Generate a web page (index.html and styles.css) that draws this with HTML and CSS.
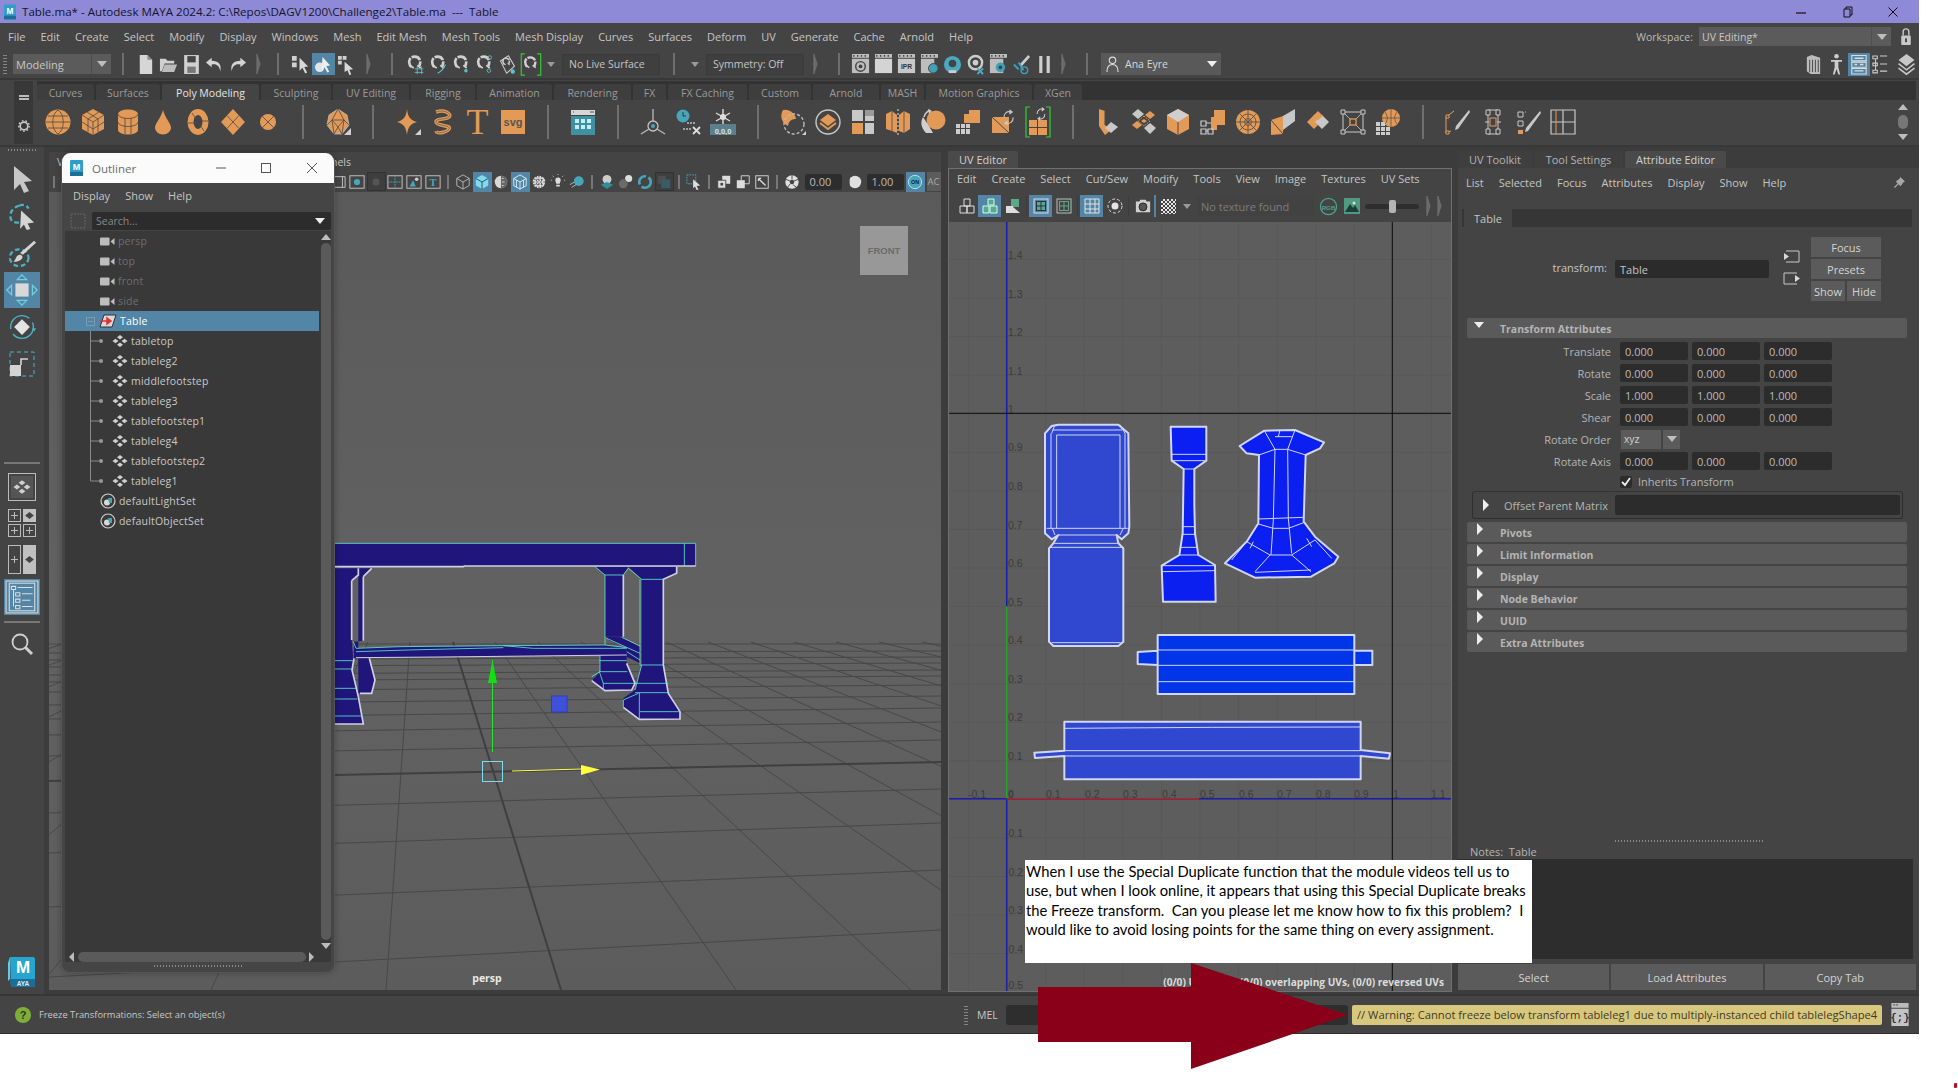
FILE: index.html
```html
<!DOCTYPE html>
<html lang="en">
<head>
<meta charset="utf-8">
<title>Table.ma - Autodesk MAYA 2024.2</title>
<link rel="stylesheet" href="styles.css">
</head>
<body>
<svg class="defs" width="0" height="0">
  <defs>
    <symbol id="mesh" viewBox="0 0 16 12"><path d="M8 0l3 2.2-3 2.2-3-2.2zM3.5 3.8l3 2.2-3 2.2L.5 6zM12.500 3.800l3 2.200-3 2.200-3-2.200zM8 7.600l3 2.200-3 2.200-3-2.200z" fill="#cfcfcf"/></symbol>
    <symbol id="cam" viewBox="0 0 15 9"><rect x="0" y="0.500" width="9.500" height="8" rx="1" fill="#bdbdbd"/><path d="M10.500 4.500L14.500 1v7z" fill="#bdbdbd"/></symbol>
    <symbol id="set" viewBox="0 0 16 16"><circle cx="8" cy="8" r="7" fill="none" stroke="#cfcfcf" stroke-width="1.200"/><circle cx="7" cy="9.500" r="3" fill="#d8d8d8"/><path d="M8 5h4v5H9z" fill="#46a4b8"/></symbol>
    <symbol id="magnet" viewBox="0 0 20 24"><path d="M5 15C1 9 3 3 9 3s8 6 5 11" fill="none" stroke="#d0d0d0" stroke-width="3" stroke-dasharray="11 1.500"/><path d="M3 13l5 3M12 13l4 3" stroke="#d0d0d0" stroke-width="2"/></symbol>
    <symbol id="cyc" viewBox="0 0 14 18"><path d="M2 9C2 4 6 2 9 3M12 9c0 5-4 7-7 6" fill="none" stroke="#c8c8c8" stroke-width="1.300"/><path d="M8 0l4 3-4 3zM6 12l-4 3 4 3z" fill="#c8c8c8"/></symbol>
    <symbol id="chev" viewBox="0 0 6 24"><path d="M1 0l4 12-4 12z" fill="#6a6a6a" stroke="#808080" stroke-width=".6"/></symbol>
    <symbol id="clap" viewBox="0 0 18 20"><path d="M0 0h18v4H0z" fill="#bdbdbd"/><path d="M2 1v2M6 1v2M10 1v2M14 1v2" stroke="#444" stroke-width="1.400"/></symbol>
    <symbol id="dia" viewBox="0 0 10 8"><path d="M5 0l5 4-5 4-5-4z" fill="#444"/></symbol>
  </defs>
</svg>

<div class="app">
  <header class="titlebar">
    <svg class="title-logo" viewBox="0 0 13 16"><rect width="13" height="16" rx="1" fill="#2f9fc9"/><path d="M0 12h13v4H0z" fill="#1e6f96"/><text x="6.500" y="10" text-anchor="middle" class="logo-m">M</text></svg>
    <span class="title-text">Table.ma* - Autodesk MAYA 2024.2: C:\Repos\DAGV1200\Challenge2\Table.ma &nbsp;--- &nbsp;Table</span>
    <div class="win-btns">
      <svg viewBox="0 0 12 12"><path d="M1 7h10" stroke="#111" stroke-width="1.200"/></svg>
      <svg viewBox="0 0 12 12"><path d="M3 3h6v8H3zM5 3V1h6v8H9" fill="none" stroke="#111"/></svg>
      <svg viewBox="0 0 12 12"><path d="M1.500 1.500l9 9M10.500 1.500l-9 9" stroke="#111"/></svg>
    </div>
  </header>

  <nav class="menubar">
    <span>File</span><span>Edit</span><span>Create</span><span>Select</span><span>Modify</span><span>Display</span><span>Windows</span><span>Mesh</span><span>Edit Mesh</span><span>Mesh Tools</span><span>Mesh Display</span><span>Curves</span><span>Surfaces</span><span>Deform</span><span>UV</span><span>Generate</span><span>Cache</span><span>Arnold</span><span>Help</span>
    <div class="workspace">
      <span class="ws-label">Workspace:</span>
      <div class="ws-drop"><span>UV Editing*</span><i class="ws-arrow"><b class="tri-d"></b></i></div>
      <svg class="lock" viewBox="0 0 12 20"><path d="M3 9V5a3 3 0 0 1 6 0v4" fill="none" stroke="#c8c8c8" stroke-width="1.500"/><rect x="1" y="9" width="10" height="10" rx="1" fill="#c8c8c8"/><rect x="5" y="12" width="2" height="4" fill="#444"/></svg>
    </div>
  </nav>

  <div class="statusline">
    <i class="grip g-status"></i>
    <div class="mode-drop"><span>Modeling</span><i class="mode-arrow"><b class="tri-d"></b></i></div>
    <i class="vsep ml11"></i>
    <div class="cells ml10">
      <span class="cell"><svg viewBox="0 0 18 22"><path d="M3 1h8l5 5v15H3z" fill="#d6d6d6"/><path d="M11 1v5h5" fill="#888"/></svg></span>
      <span class="cell"><svg viewBox="0 0 20 20"><path d="M1 4h6l2 2h7v3H6L3 17H1z" fill="#d0d0d0"/><path d="M6 10h13l-3 8H3z" fill="#bcbcbc"/></svg></span>
      <span class="cell"><svg viewBox="0 0 18 20"><path d="M2 1h14v18H2z" fill="#d0d0d0"/><path d="M5 2h8v6H5z" fill="#444"/><path d="M5 12h8v6H5z" fill="#777"/></svg></span>
      <span class="cell"><svg viewBox="0 0 20 20"><path d="M7 3L1 8l6 5V10c5-1 8 1 9 7 2-7-2-11-9-11z" fill="#d4d4d4"/></svg></span>
      <span class="cell"><svg viewBox="0 0 20 20"><path d="M13 3l6 5-6 5V10C8 9 5 11 4 17 2 10 6 6 13 6z" fill="#d4d4d4"/></svg></span>
    </div>
    <svg class="chev ml7"><use href="#chev"/></svg>
    <i class="vsep ml16"></i>
    <div class="cells ml10">
      <span class="cell"><svg viewBox="0 0 20 22"><path d="M1 2h5v5H1zM1 9h5v5H1z" fill="#d0d0d0"/><path d="M9 4l9 9-4 .5 3 6-2 1-3-6-3 3z" fill="#d8d8d8"/></svg></span>
      <span class="cell active"><svg viewBox="0 0 20 22"><circle cx="6" cy="14" r="5" fill="#e4e4e4"/><path d="M9 3l8 9-4 .5 3 6-2 1-3-6-3 3z" fill="#eee"/></svg></span>
      <span class="cell"><svg viewBox="0 0 20 22"><path d="M1 2h4v4H1zM6 2h4v4H6zM1 7h4v4H1z" fill="#d0d0d0"/><path d="M8 8l9 8-4 .5 2 5-2 .5-2-5-3 2z" fill="#d8d8d8"/></svg></span>
    </div>
    <svg class="chev ml8"><use href="#chev"/></svg>
    <i class="vsep ml20"></i>
    <div class="cells ml11">
      <span class="cell"><svg viewBox="0 0 20 24"><use href="#magnet"/><path d="M12 14v9M17 14v9M9 17h10M9 21h10" stroke="#5dbfce"/></svg></span>
      <span class="cell"><svg viewBox="0 0 20 24"><use href="#magnet"/><path d="M9 22c4-2 7-5 9-10" stroke="#5dbfce" fill="none" stroke-width="1.300"/></svg></span>
      <span class="cell"><svg viewBox="0 0 20 24"><use href="#magnet"/><circle cx="15" cy="19" r="2" fill="#5dbfce"/></svg></span>
      <span class="cell"><svg viewBox="0 0 20 24"><use href="#magnet"/><circle cx="16" cy="4" r="2" fill="none" stroke="#5dbfce"/><circle cx="15" cy="19" r="2" fill="none" stroke="#5dbfce"/></svg></span>
      <span class="cell"><svg viewBox="0 0 20 24"><path d="M2 8l9-6 7 12-9 8z" fill="none" stroke="#ccc" stroke-width="1.200"/><use href="#magnet" x="3" y="3" width="12" height="14"/><circle cx="16" cy="20" r="2.500" fill="#5dbfce"/></svg></span>
      <span class="cell"><svg class="wide" viewBox="0 0 24 26"><path d="M5 1H1v24h4M19 1h4v24h-4" fill="none" stroke="#2fd02f" stroke-width="1.300"/><use href="#magnet" x="3" y="2" width="18" height="22"/></svg></span>
    </div>
    <b class="tri-d small ml5"></b>
    <div class="sbox ml7">No Live Surface</div>
    <i class="vsep ml13"></i>
    <b class="tri-d small ml16"></b>
    <div class="sbox ml7">Symmetry: Off</div>
    <svg class="chev ml9"><use href="#chev"/></svg>
    <i class="vsep ml20"></i>
    <div class="cells ml9">
      <span class="cell"><svg viewBox="0 0 18 22"><use href="#clap" height="20"/><rect y="5" width="18" height="15" fill="#bdbdbd"/><circle cx="9" cy="13" r="5" fill="none" stroke="#444" stroke-width="1.500"/><circle cx="9" cy="13" r="2" fill="#444"/></svg></span>
      <span class="cell"><svg viewBox="0 0 18 22"><use href="#clap" height="20"/><rect y="5" width="18" height="15" fill="#d4d4d4"/></svg></span>
      <span class="cell"><svg viewBox="0 0 18 22"><use href="#clap" height="20"/><rect y="5" width="18" height="15" fill="#c8c8c8"/><text x="9" y="16" text-anchor="middle" class="ipr">IPR</text></svg></span>
      <span class="cell"><svg viewBox="0 0 18 22"><use href="#clap" height="20"/><rect y="5" width="14" height="15" fill="#bdbdbd"/><circle cx="13" cy="15" r="5" fill="#3fa0b8" stroke="#444"/></svg></span>
      <span class="cell"><svg viewBox="0 0 20 20"><circle cx="10" cy="10" r="9" fill="#49a9bf"/><circle cx="10" cy="9" r="4" fill="#444"/><path d="M6 16h8v3H6z" fill="#ccc"/></svg></span>
      <span class="cell"><svg viewBox="0 0 20 22"><circle cx="10" cy="9" r="7" fill="none" stroke="#ccc" stroke-width="2.500"/><circle cx="10" cy="9" r="3" fill="#ccc"/><path d="M12 15l6 6M18 15l-6 6" stroke="#49a9bf" stroke-width="2"/></svg></span>
      <span class="cell"><svg viewBox="0 0 18 22"><use href="#clap" height="20"/><rect y="5" width="14" height="15" fill="#bdbdbd"/><circle cx="11" cy="14" r="5" fill="#3fa0b8"/><circle cx="11" cy="14" r="2" fill="#444"/></svg></span>
      <span class="cell"><svg viewBox="0 0 20 22"><path d="M17 1l2 2-9 10-2-2z" fill="#ccc"/><path d="M2 11l5 5M7 9l5 8" stroke="#3fa0b8" stroke-width="2"/><circle cx="13" cy="17" r="3.500" fill="none" stroke="#3fa0b8" stroke-width="1.500"/></svg></span>
      <span class="cell"><svg viewBox="0 0 18 20"><path d="M4 2h3v16H4zM11 2h3v16h-3z" fill="#cfcfcf"/></svg></span>
    </div>
    <svg class="chev ml5"><use href="#chev"/></svg>
    <i class="vsep ml20"></i>
    <div class="user-drop">
      <svg viewBox="0 0 14 18"><circle cx="7" cy="4.500" r="3.500" fill="none" stroke="#ddd" stroke-width="1.200"/><path d="M1 17c0-6 3-8 6-8s6 2 6 8" fill="none" stroke="#ddd" stroke-width="1.200"/></svg>
      <span>Ana Eyre</span><b class="tri-d bright"></b>
    </div>
    <div class="right-icons">
      <svg viewBox="0 0 20 24"><path d="M3 4l5-2 9 3v17H7l-4-3z" fill="#bcbcbc"/><path d="M6 7v13M9 7v13M12 7v13M15 7v13" stroke="#444"/></svg>
      <svg class="fig" viewBox="0 0 12 24"><circle cx="6" cy="3" r="2.500" fill="#ccc"/><path d="M0 7h12v2H8v6l2 8H8l-2-6-2 6H2l2-8V9H0z" fill="#ccc"/></svg>
      <span class="rt-active"><svg viewBox="0 0 20 24"><path d="M2 2h16v6H2zM2 9.500h16v5.500H2zM2 16.500h16v6H2z" fill="none" stroke="#ddd" stroke-width="1.200"/><path d="M5 5h10M5 12h3M11 12h4M5 19h10" stroke="#ddd" stroke-width="1.500"/></svg></span>
      <svg class="rt-tree" viewBox="0 0 18 22"><path d="M1 2h5v3H1zM9 2h8M1 10h5v3H1zM9 11h8M1 18h5v3H1zM9 19h8M4 5v13" fill="none" stroke="#ccc" stroke-width="1.200"/></svg>
      <svg viewBox="0 0 20 26"><path d="M10 1l9 7-9 7-9-7z" fill="#c8c8c8"/><path d="M1 12l9 7 9-7M1 17l9 7 9-7" fill="none" stroke="#c8c8c8" stroke-width="1.800"/></svg>
    </div>
  </div>

  <section class="shelf">
    <div class="shelf-side">
      <i class="bars"></i>
      <svg class="gear" viewBox="0 0 14 14"><circle cx="7" cy="7" r="4.500" fill="none" stroke="#c8c8c8" stroke-width="2"/><circle cx="7" cy="7" r="6.200" fill="none" stroke="#c8c8c8" stroke-width="1.400" stroke-dasharray="2 2.300"/></svg>
    </div>
    <div class="shelf-main">
      <div class="shelf-tabs">
        <span class="stab w57">Curves</span><span class="stab w64">Surfaces</span><span class="stab on w97">Poly Modeling</span><span class="stab w70">Sculpting</span><span class="stab w76">UV Editing</span><span class="stab w64">Rigging</span><span class="stab w75">Animation</span><span class="stab w77">Rendering</span><span class="stab w33">FX</span><span class="stab w79">FX Caching</span><span class="stab w62">Custom</span><span class="stab w66">Arnold</span><span class="stab w43">MASH</span><span class="stab w106">Motion Graphics</span><span class="stab w48">XGen</span>
      </div>
      <div class="shelf-icons">
        <span class="sc"><svg viewBox="0 0 26 26"><circle cx="13" cy="13" r="12.500" fill="#e29a56"/><path d="M1 13h24M3 7h20M3 19h20M13 1c-7 4-7 20 0 24M13 1c7 4 7 20 0 24" stroke="#4a4a4a" stroke-width=".8" fill="none"/></svg></span>
        <span class="sc"><svg viewBox="0 0 26 26"><path d="M13 0l11 6v14l-11 6-11-6V6z" fill="#e29a56"/><path d="M2 6l11 7 11-7M13 13v13M7 3l11 7v13M19 3L8 10v13M2 13l11 7 11-7" stroke="#4a4a4a" stroke-width=".8" fill="none"/></svg></span>
        <span class="sc"><svg viewBox="0 0 26 26"><path d="M3 5a10 4.500 0 0 1 20 0v16a10 4.500 0 0 1-20 0z" fill="#e29a56"/><path d="M3 5a10 4.500 0 0 0 20 0M3 13a10 4.500 0 0 0 20 0M10 9v16M16 9v16" stroke="#4a4a4a" stroke-width=".8" fill="none"/></svg></span>
        <span class="sc"><svg viewBox="0 0 26 26"><path d="M13 1C11 9 5 14 5 19a8 6.500 0 0 0 16 0C21 14 15 9 13 1z" fill="#e29a56"/></svg></span>
        <span class="sc"><svg viewBox="0 0 26 26"><ellipse cx="13" cy="13" rx="7.500" ry="10" fill="none" stroke="#e29a56" stroke-width="6"/><path d="M7 4l4 6M19 22l-4-6M3 14h6M17 12h6" stroke="#4a4a4a" stroke-width=".8"/></svg></span>
        <span class="sc"><svg viewBox="0 0 26 26"><path d="M13 0l12 13-12 13L1 13z" fill="#e29a56"/><path d="M7 6.500L19 19.500M19 6.500L7 19.500" stroke="#4a4a4a" stroke-width=".8"/></svg></span>
        <span class="sc"><svg viewBox="0 0 26 26"><circle cx="13" cy="13" r="8" fill="#e29a56"/><path d="M7 7l12 12M19 7L7 19" stroke="#4a4a4a" stroke-width=".8"/></svg></span>
        <i class="ssep"></i>
        <span class="sc"><svg viewBox="0 0 26 26"><path d="M13 0l9 6 2 10-7 9H9l-7-9 2-10z" fill="#e29a56" stroke="#bbb" stroke-width=".8"/><path d="M13 0L7 11h12zM2 16l5-5 2 14M24 16l-5-5-2 14M9 25l4-7 4 7M7 11l6 7 6-7" stroke="#4a4a4a" stroke-width=".8" fill="none"/><path d="M26 19v7h-7z" fill="#d0d0d0"/></svg></span>
        <i class="ssep"></i>
        <span class="sc"><svg viewBox="0 0 26 26"><path d="M12 0c1 8 3 11 10 13-7 2-9 5-10 13-1-8-3-11-10-13 7-2 9-5 10-13z" fill="#e29a56"/><path d="M26 20v6h-6z" fill="#d0d0d0"/></svg></span>
        <span class="sc"><svg viewBox="0 0 26 26"><path d="M6 3c9-3 16 2 13 5S6 9 6 13s16 3 13 7-12 5-13 2" fill="none" stroke="#e29a56" stroke-width="3.600"/><path d="M6 3c9-3 16 2 13 5S6 9 6 13s16 3 13 7-12 5-13 2" fill="none" stroke="#4a4a4a" stroke-width=".6"/></svg></span>
        <span class="sc big-t">T</span>
        <span class="sc"><svg viewBox="0 0 26 26"><rect x="1" y="1" width="24" height="24" fill="#e29a56"/><text x="13" y="17" text-anchor="middle" class="t-svg">svg</text></svg></span>
        <i class="ssep"></i>
        <span class="sc"><svg viewBox="0 0 26 26"><path d="M1 1h24v5H1z" fill="#d6d6d6"/><path d="M1 7h24v19H1z" fill="#3f90a2"/><path d="M5 10h4v4H5zM11 10h4v4h-4zM17 10h4v4h-4zM5 16h4v4H5zM11 16h4v4h-4zM17 16h4v4h-4z" fill="#dff" fill-opacity=".85"/><path d="M3 3h1M20 3h4" stroke="#555"/></svg></span>
        <i class="ssep"></i>
        <span class="sc"><svg viewBox="0 0 26 26"><circle cx="13" cy="17" r="5" fill="none" stroke="#c4c4c4" stroke-width="1.300"/><circle cx="13" cy="17" r="2" fill="#48a6ba"/><path d="M13 0v12M9 20l-8 5M17 20l8 5" stroke="#bbb" stroke-width="1.300"/></svg></span>
        <span class="sc"><svg viewBox="0 0 26 26"><circle cx="8" cy="7" r="6.500" fill="#48a6ba"/><path d="M8 3v4h3" stroke="#333" fill="none"/><path d="M12 14h8M8 20h8" stroke="#c0c0c0" stroke-width="1.500" stroke-dasharray="2 1"/><path d="M18 18l7 7M25 18l-7 7" stroke="#ddd" stroke-width="1.800"/></svg></span>
        <span class="sc"><svg viewBox="0 0 26 26"><path d="M13 0v15M6 4l14 8M20 4L6 12" stroke="#ddd" stroke-width="1.400"/><circle cx="13" cy="8" r="3" fill="#ddd"/><rect x="0" y="15" width="26" height="11" fill="#5b7f8c"/><text x="13" y="24.500" text-anchor="middle" class="t-zero">0,0,0</text></svg></span>
        <i class="ssep"></i>
        <span class="sc"><svg viewBox="0 0 26 26"><path d="M3 1a11 11 0 0 1 13 9A7 7 0 0 0 8 17 11 11 0 0 1 3 1z" fill="#e29a56"/><circle cx="14" cy="15" r="10" fill="none" stroke="#bbb" stroke-width="1.400" stroke-dasharray="3 2"/><path d="M26 22v4h-4z" fill="#d0d0d0"/></svg></span>
        <span class="sc"><svg viewBox="0 0 26 26"><circle cx="13" cy="13" r="12" fill="none" stroke="#c8c8c8" stroke-width="1.400"/><path d="M13 5l8 6-8 6-8-6z" fill="#e29a56"/><path d="M5 14l8 6 8-6" fill="none" stroke="#e29a56" stroke-width="2"/></svg></span>
        <span class="sc"><svg viewBox="0 0 26 26"><path d="M2 1h11v11H2zM15 1h9v11h-9zM15 14h9v11h-9z" fill="#c8c8c8"/><path d="M2 14h11v11H2z" fill="#e29a56"/><path d="M15 1h9v6h-9z" fill="#999"/></svg></span>
        <span class="sc"><svg viewBox="0 0 26 26"><path d="M1 5l6-3 5 4v18l-5-2-6-2zM14 6l5-4 6 3v15l-6 4-5-2z" fill="#e29a56"/><path d="M13 0v26" stroke="#ddd" stroke-dasharray="2 2"/><path d="M7 2v20M19 2v22" stroke="#4a4a4a" stroke-width=".8"/></svg></span>
        <span class="sc"><svg viewBox="0 0 26 26"><circle cx="16" cy="11" r="9.500" fill="#e29a56"/><path d="M6 24c-5-5-6-11-3-16l6 9 4 7z" fill="#cfcfcf"/><path d="M4 8c1-4 4-6 6-7" stroke="#ccc" fill="none" stroke-width="1.500"/><path d="M8 0l4 2-3 3z" fill="#ccc"/></svg></span>
        <span class="sc"><svg viewBox="0 0 26 26"><path d="M14 1h11v13H14zM9 5h5v9H9z" fill="#e29a56"/><path d="M1 15h14v10H1zM15 15h3v4h-3z" fill="none"/><path d="M1 15h4v4H1zM6 15h4v4H6zM11 15h4v4h-4zM1 20h4v5H1zM6 20h4v5H6zM11 20h4v5h-4z" fill="#ccc"/></svg></span>
        <span class="sc"><svg viewBox="0 0 26 26"><path d="M2 8h17v16H2z" fill="#e29a56"/><path d="M2 8l17 16" stroke="#4a4a4a"/><use href="#cyc" x="12" y="0" width="13" height="17"/></svg></span>
        <span class="sc"><svg viewBox="0 0 26 32" class="tall"><path d="M5 1H1v30h4M21 1h4v30h-4" fill="none" stroke="#2fd02f" stroke-width="1.200"/><path d="M4 14h8v7H4zM13 14h9v7h-9zM4 22h8v7H4zM13 22h9v7h-9z" fill="#e29a56"/><use href="#cyc" x="10" y="1" width="12" height="14"/></svg></span>
        <i class="ssep"></i>
        <span class="sc"><svg viewBox="0 0 26 26"><path d="M4 0l6 2v14l6 5-6 5-6-9z" fill="#e29a56"/><path d="M10 2v14" stroke="#4a4a4a"/><path d="M16 13l7 5-7 6-6-5z" fill="#c8c8c8"/></svg></span>
        <span class="sc"><svg viewBox="0 0 26 26"><path d="M8 0l6 5-6 5-6-5zM20 14l6 5-6 6-6-6z" fill="#c8c8c8"/><path d="M14 7l6 5-6 5-6-5z" fill="none" stroke="#e29a56" stroke-dasharray="1.500 1"/><path d="M14 10l3 2-3 2-3-2zM7 12l5 4-5 4-5-4zM20 2l5 4-5 4-5-4z" fill="#e29a56"/></svg></span>
        <span class="sc"><svg viewBox="0 0 26 26"><path d="M13 0l11 6v14l-11 6-11-6V6z" fill="#e29a56"/><path d="M2 6l11 7 11-7-11-6z" fill="#cfcfcf"/><path d="M13 13v13" stroke="#4a4a4a"/></svg></span>
        <span class="sc"><svg viewBox="0 0 26 26"><path d="M14 1h11v15h-8v5h-6V8h3z" fill="#e29a56"/><path d="M1 12h5v5H1zM1 20h5v5H1zM8 20h5v5H8z" fill="none" stroke="#ccc" stroke-width="1.200"/><path d="M6 14h5M6 22h2" stroke="#ccc"/></svg></span>
        <span class="sc"><svg viewBox="0 0 26 26"><circle cx="13" cy="13" r="12" fill="#e29a56"/><path d="M1 13h24M13 1v24M4.500 4.500l17 17M21.500 4.500l-17 17" stroke="#4a4a4a" stroke-width=".8"/><circle cx="13" cy="13" r="8" fill="none" stroke="#4a4a4a" stroke-width=".8"/><circle cx="13" cy="13" r="3.500" fill="none" stroke="#4a4a4a" stroke-width=".8"/></svg></span>
        <span class="sc"><svg viewBox="0 0 26 26"><path d="M1 11l12-4v18l-12 1z" fill="#e29a56"/><path d="M1 11l12 14" stroke="#4a4a4a"/><path d="M13 7l12-7v12l-12 9z" fill="#c8c8c8"/></svg></span>
        <span class="sc"><svg viewBox="0 0 26 26"><path d="M9 6l7 7-7 7-7-7z" fill="#e29a56"/><path d="M17 6l7 7-7 7-7-7z" fill="#c8c8c8"/><path d="M13 2l5 5-5 4-5-4z" fill="#e29a56"/></svg></span>
        <span class="sc"><svg viewBox="0 0 26 26"><path d="M3 3h20v20H3z" fill="none" stroke="#c8c8c8"/><path d="M3 3l7 7M23 3l-7 7M3 23l7-7M23 23l-7-7" stroke="#c8c8c8" stroke-width=".8"/><rect x="10" y="10" width="6" height="6" fill="none" stroke="#e29a56" stroke-width="1.300"/><path d="M1 1h4v4H1zM21 1h4v4h-4zM1 21h4v4H1zM21 21h4v4h-4z" fill="#444" stroke="#c8c8c8"/></svg></span>
        <span class="sc"><svg viewBox="0 0 26 26"><circle cx="16" cy="9" r="9" fill="#e29a56"/><path d="M7 9h18M16 0v18M10 3c3 4 3 8 0 12M22 3c-3 4-3 8 0 12" stroke="#4a4a4a" stroke-width=".7" fill="none"/><path d="M1 13h4v4H1zM6 13h4v4H6zM1 18h4v4H1zM6 18h4v4H6zM11 18h4v4h-4zM1 23h4v3H1zM6 23h4v3H6zM11 23h4v3h-4z" fill="#ccc"/></svg></span>
        <i class="ssep"></i>
        <span class="sc"><svg viewBox="0 0 26 26"><path d="M1 8v16M1 8l8-6M1 24l5-2" stroke="#e29a56" fill="none"/><path d="M24 1l1 2-12 17-3 1 1-4z" fill="#c8c8c8"/><path d="M1 6h3v3H1zM1 22h3v3H1z" fill="#444" stroke="#e29a56"/></svg></span>
        <span class="sc"><svg viewBox="0 0 26 26"><path d="M8 1h10M8 25h10M8 6v14M18 6v14M5 13h4M17 13h4" stroke="#c8c8c8" fill="none"/><path d="M6 1h4v5H6zM16 1h4v5h-4zM6 20h4v5H6zM16 20h4v5h-4z" fill="#444" stroke="#c8c8c8"/><rect x="10" y="9" width="6" height="8" fill="none" stroke="#e29a56"/></svg></span>
        <span class="sc"><svg viewBox="0 0 26 26"><path d="M3 3h5v5H3zM10 3h1M3 12h5v5H3z" fill="none" stroke="#c8c8c8"/><path d="M3 21h5v4H3z" fill="#e29a56"/><path d="M25 2l1 2-13 18-3 1 1-4z" fill="#c8c8c8"/></svg></span>
        <span class="sc"><svg viewBox="0 0 26 26"><path d="M1 1h24v24H1zM13 1v24M1 13h24" fill="none" stroke="#c8c8c8" stroke-width="1.200"/><path d="M6 1v24" stroke="#e29a56"/></svg></span>
        <span class="scroller"><b class="tri-u"></b><i class="knob"></i><b class="tri-d"></b></span>
      </div>
    </div>
  </section>

  <main class="main">
    <aside class="toolbox">
      <i class="grip-h"></i>
      <span class="tool t-first"><svg viewBox="0 0 24 28"><path d="M4 1l18 15-8 1 5 9-5 2-4-9-6 6z" fill="#c8c8c8"/></svg></span>
      <span class="tool"><svg viewBox="0 0 30 30"><path d="M12 4C4 6 0 14 4 20c3 3 8 2 10 1" fill="none" stroke="#4cb3c7" stroke-width="2.400" stroke-dasharray="5 3"/><path d="M12 4c5-2 9 0 10 3" fill="none" stroke="#4cb3c7" stroke-width="2.400" stroke-dasharray="5 3"/><path d="M14 9l14 13-7 1 3 6-4 1-3-6-4 5z" fill="#d4d4d4"/></svg></span>
      <span class="tool"><svg viewBox="0 0 30 30"><ellipse cx="12" cy="20" rx="10" ry="9" fill="none" stroke="#4cb3c7" stroke-width="2.400" stroke-dasharray="5 3"/><path d="M28 2l2 2-14 13-3-2z" fill="#d4d4d4"/><path d="M10 18c3-3 7 0 5 3s-7 4-9 3c2-1 2-4 4-6z" fill="#d4d4d4"/></svg></span>
      <span class="tool tool-on"><svg viewBox="0 0 36 36"><rect x="11" y="11" width="14" height="14" fill="#d8d8d8"/><path d="M18 2l5 5H13zM18 34l5-5H13zM2 18l5-5v10zM34 18l-5-5v10z" fill="none" stroke="#6fd0e0" stroke-width="1.300"/></svg></span>
      <span class="tool"><svg viewBox="0 0 32 32"><circle cx="16" cy="16" r="13" fill="none" stroke="#4cb3c7" stroke-width="1.500" stroke-dasharray="32 6"/><path d="M16 7l9 9-9 9-9-9z" fill="#e4e4e4"/><path d="M27 18l3 3 2-4z" fill="#4cb3c7"/></svg></span>
      <span class="tool"><svg viewBox="0 0 28 28"><rect x="2" y="2" width="24" height="24" fill="none" stroke="#4cb3c7" stroke-dasharray="4 3"/><rect x="2" y="15" width="11" height="11" fill="#d4d4d4"/><path d="M13 15V9h7" fill="none" stroke="#d4d4d4" stroke-width="1.600"/></svg></span>
      <i class="tool-rule rule-a"></i>
      <span class="lay-one"><svg viewBox="0 0 14 12"><use href="#mesh"/></svg></span>
      <span class="lay-four"><i class="plus"></i><i class="fill-d"><svg><use href="#dia"/></svg></i><i class="plus"></i><i class="plus"></i></span>
      <span class="lay-two"><i class="plus tall"></i><i class="fill-d tall"><svg><use href="#dia"/></svg></i></span>
      <span class="tool tool-on tool-out"><svg viewBox="0 0 32 32"><rect x="1" y="1" width="30" height="30" fill="none" stroke="#ddd"/><rect x="4" y="3" width="24" height="26" fill="none" stroke="#ddd"/><path d="M6 6h4v3H6zM10 12h4v3h-4zM10 18h4v3h-4zM10 24h4v3h-4zM12 7h14M16 13h10M16 19h8M16 25h10M8 9v16" fill="none" stroke="#ddd"/></svg></span>
      <i class="tool-rule"></i>
      <span class="tool t-mag"><svg viewBox="0 0 24 24"><circle cx="10" cy="10" r="7.500" fill="none" stroke="#cfcfcf" stroke-width="1.800"/><path d="M15 15l7 7" stroke="#cfcfcf" stroke-width="3"/></svg></span>
      <svg class="m-logo" viewBox="0 0 30 32"><path d="M3 1h24l1 2v26l-1 2H4z" fill="#27a5cf"/><path d="M1 7l2-6v22l-2 2z" fill="#6cc7e3"/><path d="M3 23h25v8H4z" fill="#1b6f96"/><text x="16" y="17" text-anchor="middle" class="logo-big">M</text><text x="16" y="29.500" text-anchor="middle" class="logo-aya">AYA</text></svg>
    </aside>

    <section class="viewport">
      <div class="vp-menu"><span>V</span><span>nels</span></div>
      <div class="vp-tools">
        <i class="vp-tick"></i>
        <span class="vc"><svg viewBox="0 0 18 18"><path d="M1 3h16v12H1zM4 3v12M14 3v12" fill="none" stroke="#ccc"/></svg></span>
        <span class="vc"><svg viewBox="0 0 18 18"><rect x="1" y="2" width="16" height="14" fill="none" stroke="#ccc"/><circle cx="9" cy="9" r="3.500" fill="#48a6ba"/></svg></span>
        <span class="vc dark-on"><svg viewBox="0 0 18 18"><circle cx="9" cy="9" r="4" fill="#555"/></svg></span>
        <span class="vc"><svg viewBox="0 0 18 18"><rect x="1" y="2" width="16" height="14" fill="none" stroke="#ccc"/><path d="M1 9h16M9 2v14" stroke="#48a6ba" stroke-dasharray="2 1"/></svg></span>
        <span class="vc"><svg viewBox="0 0 18 18"><rect x="1" y="2" width="16" height="14" fill="none" stroke="#ccc"/><path d="M4 14l4-7 3 7z" fill="#48a6ba"/><circle cx="12" cy="6" r="2" fill="#ccc"/></svg></span>
        <span class="vc"><svg viewBox="0 0 18 18"><rect x="1" y="2" width="16" height="14" fill="none" stroke="#ccc"/><text x="9" y="14" text-anchor="middle" class="t-vp">T</text></svg></span>
        <i class="vp-sep"></i>
        <span class="vc"><svg viewBox="0 0 18 18"><path d="M9 1l7 4v8l-7 4-7-4V5zM2 5l7 4 7-4M9 9v8" fill="none" stroke="#bbb"/></svg></span>
        <span class="vc blue"><svg viewBox="0 0 18 18"><path d="M9 1l7 4v8l-7 4-7-4V5z" fill="#7fdcef"/><path d="M2 5l7 4 7-4M9 9v8" fill="none" stroke="#245"/></svg></span>
        <span class="vc"><svg viewBox="0 0 18 18"><circle cx="9" cy="9" r="7" fill="#d8d8d8"/><path d="M9 2a7 7 0 0 1 0 14z" fill="#666"/><path d="M10 5h2M10 9h3M10 13h2" stroke="#ddd"/></svg></span>
        <span class="vc blue"><svg viewBox="0 0 18 18"><path d="M9 1l7 4v8l-7 4-7-4V5zM2 5l7 4 7-4M9 9v8M5 7v8M13 7v8" fill="none" stroke="#e4f4f8"/></svg></span>
        <span class="vc"><svg viewBox="0 0 18 18"><circle cx="9" cy="9" r="7" fill="#ddd"/><path d="M3 6h12M2 9h14M3 12h12M6 2v14M9 2v14M12 2v14" stroke="#444" stroke-dasharray="2 2"/></svg></span>
        <span class="vc"><svg viewBox="0 0 18 18"><path d="M6 7a3 3 0 1 1 6 0c0 2-1 2-1 4H7c0-2-1-2-1-4zM7 12h4v2H7z" fill="#ddd"/><path d="M9 0v1M2 7H1M17 7h-1M3 2l1 1M15 2l-1 1" stroke="#ddd"/></svg></span>
        <span class="vc"><svg viewBox="0 0 18 18"><circle cx="11" cy="8" r="5.500" fill="#48a6ba"/><path d="M1 12l5-3M3 15l5-3" stroke="#bbb"/></svg></span>
        <i class="vp-sep"></i>
        <span class="vc"><svg viewBox="0 0 18 18"><circle cx="9" cy="6" r="5" fill="#ccc"/><path d="M2 12l7 5 7-5-7-3z" fill="#2f8d9f"/></svg></span>
        <span class="vc"><svg viewBox="0 0 18 18"><circle cx="12" cy="5" r="4" fill="#ddd"/><circle cx="6" cy="11" r="5" fill="#6a6a6a"/></svg></span>
        <span class="vc"><svg viewBox="0 0 18 18"><circle cx="9" cy="9" r="6.500" fill="none" stroke="#48a6ba" stroke-width="3" stroke-dasharray="14 3"/></svg></span>
        <span class="vc dark-on"><svg viewBox="0 0 18 18"><path d="M2 2h9v9H2z" fill="#4e4e4e"/><path d="M6 6h10v10H6z" fill="#3a5c66"/></svg></span>
        <i class="vp-sep"></i>
        <span class="vc"><svg viewBox="0 0 18 18"><rect x="1" y="1" width="10" height="10" fill="none" stroke="#48a6ba" stroke-dasharray="2 1"/><path d="M8 6l8 7-4 .5 2 4-2 .5-2-4-2 2z" fill="#ddd"/></svg></span>
        <i class="vp-sep"></i>
        <span class="vc"><svg viewBox="0 0 18 18"><path d="M7 2h9v9H7z" fill="#ddd"/><path d="M2 7h9v9H2z" fill="#ddd" stroke="#444"/><path d="M5 10h3v3H5z" fill="#444"/></svg></span>
        <span class="vc"><svg viewBox="0 0 18 18"><path d="M7 2h9v9H7z" fill="none" stroke="#ddd"/><path d="M2 7h9v9H2z" fill="#ddd"/></svg></span>
        <span class="vc"><svg viewBox="0 0 18 18"><rect x="2" y="2" width="14" height="14" fill="none" stroke="#ddd"/><path d="M5 5l8 8M5 5h3M5 5v3" stroke="#ddd" stroke-width="1.400"/></svg></span>
        <i class="vp-sep"></i>
        <span class="vc"><svg viewBox="0 0 18 18"><circle cx="9" cy="9" r="7.500" fill="#e0e0e0"/><circle cx="9" cy="9" r="2.500" fill="#444"/><path d="M9 1v5M16 6l-5 2M14 15l-4-3M4 15l3-4M2 6l5 2" stroke="#444"/></svg></span>
        <span class="vp-val">0.00</span>
        <span class="vc narrow"><svg viewBox="0 0 18 18"><circle cx="9" cy="9" r="7" fill="#e0e0e0"/><path d="M3 2h5a7 7 0 0 0 0 14H3z" fill="#444"/></svg></span>
        <span class="vp-val v2">1.00</span>
        <span class="vc blue on-btn"><svg viewBox="0 0 18 18"><circle cx="9" cy="9" r="7.500" fill="#48a6ba" stroke="#bfeaf2"/><text x="9" y="11.500" text-anchor="middle" class="t-on">ON</text></svg></span>
        <span class="ac">AC</span>
      </div>
      <div class="scene">
        <svg width="892" height="798" viewBox="49 192 892 798">
          <defs><linearGradient id="vpg" x1="0" y1="0" x2="0" y2="1"><stop offset="0" stop-color="#5a5a5a"/><stop offset=".55" stop-color="#626262"/><stop offset="1" stop-color="#5c5c5c"/></linearGradient></defs>
          <rect x="49" y="192" width="892" height="798" fill="url(#vpg)"/>
          <path class="grid3d" d="M49 644H941M49 653L941 651M49 660L941 657M49 667L941 663M49 675L941 670M49 682L941 676M49 692L941 685M49 705L941 696M49 719L941 708M49 735L941 722M49 756L941 740M49 813L941 789M49 853L941 823M49 907L941 870M49 977L941 930M69 642L-1014 990M112 642L-839 990M154 642L-664 990M197 642L-489 990M240 642L-314 990M282 642L-139 990M325 642L36 990M368 642L211 990M410 642L386 990M495 642L736 990M538 642L911 990M581 642L1086 990M623 642L1261 990M666 642L1436 990M708 642L1611 990M751 642L1786 990M794 642L1961 990M836 642L2136 990M879 642L2311 990M922 642L2486 990"/>
          <path class="grid3d-dark" d="M49 781L941 762M453 642L561 990"/>
          <g transform="translate(330 520) scale(.33333)" class="tbl">
            <path class="t-fill" d="M15 145H85V165L65 182V360L70 420L65 450L85 530L100 612H15ZM85 145H125L100 170V362L72 365V415H118L135 480L125 520H85Z"/>
            <path class="t-out" d="M65 182V360M100 170V362M72 415L66 450L85 530L100 612H15M118 415L135 480L125 520H90M85 145V165L65 182M125 145L100 170"/>
            <path class="t-teal" d="M15 422H70M15 447H66M15 505H78M15 537H82M15 588H96M70 365L78 385"/>
            <path class="t-fill" d="M795 140H895L880 165V350H825V165ZM810 405H890V430L915 490L905 510L825 512L785 482L810 455Z"/>
            <path class="t-out" d="M880 165V350M890 430L915 490L905 510L825 512L785 482"/>
            <path class="t-teal" d="M795 140L825 165H880L895 145M825 165V375M810 405V455L785 470M808 422H890M808 455H892M820 490V512M808 455L820 490H912"/>
            <path class="t-fill" d="M830 350L875 352L930 380V430L890 410V383L835 360Z"/>
            <path class="t-teal" d="M830 355L930 400M875 352L930 378M890 395L930 420"/>
            <path class="t-fill" d="M78 385L210 380L520 377L825 375L890 383V405L610 408L330 411L78 413Z"/>
            <path class="t-teal" d="M78 385L210 380L520 377L825 375L890 383M78 395L235 390L520 383M520 377L610 385H890"/>
            <path class="t-out thin" d="M78 413L330 411L610 408L890 405"/>
            <path class="t-fill" d="M895 140H1040V160L1000 178V435L1015 520L1050 575V597L928 598L880 562V535L915 510L935 435V178Z"/>
            <path class="t-out" d="M1040 140V160L1000 178V435L1015 520L1050 575V597L928 598L880 562"/>
            <path class="t-teal" d="M895 145L935 178H1000M930 178V435H1000M915 490H1015M915 518H1015M925 520L880 540M930 575H1050M928 518V598M880 540V562M915 510L935 435"/>
            <rect class="t-fill" x="15" y="70" width="1082" height="68"/>
            <path class="t-teal" d="M15 70H1097V138M1063 70V138"/>
            <path class="t-out" d="M15 140H400L403 138H1097"/>
          </g>
          <rect x="551.500" y="696" width="15.500" height="16" fill="#4150da" stroke="#2b3cc6"/>
          <path d="M492.500 752V660" stroke="#2ee02e" stroke-width="1"/>
          <path d="M492.500 660L488 683H497Z" fill="#10e010"/>
          <rect x="482.500" y="761.500" width="20" height="20" fill="none" stroke="#7fdcef"/>
          <path d="M512 771L582 769" stroke="#ffff50"/>
          <path d="M581 765L600 769.500L581 775Z" fill="#ffff40"/>
          <text x="487" y="982" text-anchor="middle" class="persp">persp</text>
          <rect x="860" y="226" width="48" height="49" fill="#989898"/>
          <text x="884" y="254" text-anchor="middle" class="front">FRONT</text>
        </svg>
      </div>
    </section>

    <section class="uv-panel">
      <div class="tab-strip"><span class="ptab on uv-tab">UV Editor</span></div>
      <div class="uv-box">
        <div class="uv-menu"><span>Edit</span><span>Create</span><span>Select</span><span>Cut/Sew</span><span>Modify</span><span>Tools</span><span>View</span><span>Image</span><span>Textures</span><span>UV Sets</span></div>
        <div class="uv-tools">
          <span class="uc"><svg viewBox="0 0 16 16"><path d="M5 1h6v7H5zM1 8h7v7H1zM8 8h7v7H8z" fill="none" stroke="#ddd"/></svg></span>
          <span class="uc on"><svg viewBox="0 0 16 16"><path d="M6 1h6v6H6z" fill="#5ba88a" stroke="#cfe"/><path d="M1 8h6v7H1zM8 8h7v7H8z" fill="#5ba88a" stroke="#cfe"/></svg></span>
          <span class="uc"><svg viewBox="0 0 16 16"><path d="M6 1h8v8H6z" fill="#5ba88a"/><path d="M1 8h7v7H1z" fill="#ddd"/><path d="M8 9l7 6H8z" fill="#ddd"/></svg></span>
          <i class="uc-sep"></i>
          <span class="uc on"><svg viewBox="0 0 16 16"><rect x="1" y="1" width="14" height="14" fill="none" stroke="#ddd"/><rect x="3.500" y="3.500" width="9" height="9" fill="#5ba88a" stroke="#234"/><path d="M8 3v10M3 8h10" stroke="#234"/></svg></span>
          <span class="uc"><svg viewBox="0 0 16 16"><rect x="1" y="1" width="14" height="14" fill="none" stroke="#bbb"/><rect x="3.500" y="3.500" width="9" height="9" fill="none" stroke="#5ba88a"/><path d="M8 3v10M3 8h10" stroke="#5ba88a"/></svg></span>
          <i class="uc-sep"></i>
          <span class="uc on"><svg viewBox="0 0 16 16"><path d="M1 1h14v14H1zM1 6h14M1 11h14M6 1v14M11 1v14" fill="none" stroke="#e4e4e4"/></svg></span>
          <span class="uc"><svg viewBox="0 0 16 16"><circle cx="8" cy="8" r="7" fill="none" stroke="#ddd" stroke-dasharray="3 2"/><circle cx="8" cy="8" r="3.500" fill="#e4e4e4"/></svg></span>
          <i class="uc-sep"></i>
          <span class="uc"><svg viewBox="0 0 18 16"><path d="M1 3h4l1-2h6l1 2h4v12H1z" fill="#d0d0d0"/><circle cx="9" cy="9" r="4.500" fill="#555" stroke="#222"/></svg></span>
          <i class="uc-bar"></i>
          <span class="uc checker"></span>
          <b class="tri-d small uv-tri"></b>
          <span class="no-tex">No texture found</span>
          <span class="uc rgb"><svg viewBox="0 0 20 20"><circle cx="10" cy="10" r="8.500" fill="none" stroke="#4da38a" stroke-width="1.300"/><text x="10" y="13.500" text-anchor="middle" class="t-rgb">RGB</text></svg></span>
          <span class="uc"><svg viewBox="0 0 16 16"><rect width="16" height="16" fill="#4f9a80"/><path d="M1 14l5-8 3 4 2-3 4 7z" fill="#1d3f37"/><circle cx="10" cy="5" r="1.500" fill="#ddd"/></svg></span>
          <span class="slider"><i class="slider-knob"></i></span>
          <svg class="chev uv-chev1"><use href="#chev"/></svg>
          <svg class="chev uv-chev2"><use href="#chev"/></svg>
        </div>
        <div class="uv-canvas">
          <svg width="502" height="770" viewBox="949 222 502 770">
            <defs><pattern id="uvg" patternUnits="userSpaceOnUse" x="1006.700" y="413.300" width="38.560" height="38.560"><path d="M0 0H38.560M0 0V38.560" class="uvg-line"/></pattern></defs>
            <rect x="949" y="222" width="502" height="770" fill="#5d5d5d"/>
            <rect x="949" y="222" width="502" height="770" fill="url(#uvg)"/>
            <g transform="translate(945 400) scale(.33333)">
              <path class="uv-a" d="M300 100L320 78L340 74H520L550 100L553 380L550 400L530 418L515 405L520 430L535 445V725L520 738H325L312 725V445L325 430L340 405L320 418L300 400Z"/>
              <path class="uv-i" d="M322 90H532M335 105H525M318 100V385M335 105V385M525 105V385M540 100V385M305 385H548M340 405H515M322 430H525M315 442H532M320 728H527M330 74L320 100M525 74L540 100M322 385L330 405M535 385L525 405"/>
              <path class="uv-b" d="M677 80H784V182L748 207V315L750 400L760 465L810 495L812 605H654L650 497L703 465L713 400L716 207L680 182Z"/>
              <path class="uv-i" d="M677 163H784M680 182H780M716 207H748M713 380H748M710 403H750M705 442H755M703 465H760M650 497H810M652 515L810 512"/>
              <path class="uv-b" d="M884 138L958 92L1050 90L1137 127L1125 145L1082 165L1076 365L1110 410L1180 470L1168 490L1098 530L930 533L840 490L905 425L940 370L942 165L905 160Z"/>
              <path class="uv-i" d="M958 92L990 148M1050 90L1028 148M990 110H1040M990 148H1028M942 165L990 148M1082 165L1028 148M990 148L985 360M1028 148L1030 355M940 357L1076 352M985 360L978 465M1030 355L1040 460M940 372L985 385H1030L1076 368M905 425L975 465H1040L1110 420M930 515L975 465M1098 515L1040 465M930 517L1098 510M860 480L905 425M1160 475L1110 420M1000 110L1005 90M925 425L915 445M1085 415L1100 440"/>
              <path class="uv-c" d="M638 705H1228V882H638ZM578 756L638 752V795L578 792ZM1228 752H1282V795H1228Z"/>
              <path class="uv-i" d="M638 750H1228M638 796H1228M638 845H1228"/>
              <path class="uv-a" d="M358 965H1247V1050L1335 1060L1332 1076L1247 1068V1138H358V1068L270 1074L268 1058L358 1052Z"/>
              <path class="uv-i" d="M358 985L800 982L1247 981M358 1052H1247M358 1068H1247"/>
            </g>
            <path d="M1006.700 222V606.500" class="ax-blue"/>
            <path d="M1006.700 606.500V798.700" class="ax-green"/>
            <path d="M1006.700 798.700V992" class="ax-blue"/>
            <path d="M949 798.700H1451" class="ax-blue"/>
            <path d="M1006.700 798.700H1199" class="ax-red"/>
            <path d="M949 413.300H1451M1392.300 222V992" class="ax-black"/>
            <g class="uv-labels">
              <text x="1008" y="259">1.4</text><text x="1008" y="298">1.3</text><text x="1008" y="336">1.2</text><text x="1008" y="375">1.1</text><text x="1008" y="413">1</text>
              <text x="1008" y="451">0.9</text><text x="1008" y="490">0.8</text><text x="1008" y="529">0.7</text><text x="1008" y="567">0.6</text><text x="1008" y="606">0.5</text><text x="1008" y="644">0.4</text><text x="1008" y="683">0.3</text><text x="1008" y="721">0.2</text><text x="1008" y="760">0.1</text>
              <text x="968" y="798">-0.1</text><text x="1008" y="798" class="lbl-b">0</text><text x="1046" y="798">0.1</text><text x="1085" y="798">0.2</text><text x="1123" y="798">0.3</text><text x="1162" y="798">0.4</text><text x="1200" y="798">0.5</text><text x="1239" y="798">0.6</text><text x="1277" y="798">0.7</text><text x="1316" y="798">0.8</text><text x="1354" y="798">0.9</text><text x="1393" y="798">1</text><text x="1431" y="798">1.1</text>
              <text x="1005" y="837">-0.1</text><text x="1005" y="876">-0.2</text><text x="1005" y="914">-0.3</text><text x="1005" y="953">-0.4</text><text x="1005" y="989">-0.5</text>
            </g>
            <text x="1444" y="985.500" text-anchor="end" class="uv-status">(0/0) UV shells, (0/0) overlapping UVs, (0/0) reversed UVs</text>
          </svg>
        </div>
      </div>
    </section>

    <section class="attr-panel">
      <div class="tab-strip"><span class="ptab w74">UV Toolkit</span><span class="ptab w89">Tool Settings</span><span class="ptab on w101">Attribute Editor</span></div>
      <div class="attr-menu"><span>List</span><span>Selected</span><span>Focus</span><span>Attributes</span><span>Display</span><span>Show</span><span>Help</span>
        <svg class="pin" viewBox="0 0 12 12"><path d="M7 0l5 5-2 1-2 3-1 1-2-2-4 4-1-1 4-4-2-2 1-1 3-2z" fill="#a8a8a8"/></svg>
      </div>
      <div class="node-tabs"><span class="node-tab">Table</span></div>
      <div class="xform-row">
        <span class="xf-label">transform:</span>
        <span class="xf-field">Table</span>
        <div class="xf-icons">
          <svg viewBox="0 0 17 13"><path d="M3 1h13v11H3" fill="none" stroke="#c8c8c8"/><path d="M6 6.500L1 3v7z" fill="#d8d8d8"/></svg>
          <svg viewBox="0 0 17 13"><path d="M14 1H1v11h13" fill="none" stroke="#c8c8c8"/><path d="M17 6.500l-5-3.500v7z" fill="#d8d8d8"/></svg>
        </div>
        <div class="xf-btns">
          <span class="btn">Focus</span><span class="btn">Presets</span>
          <div class="btn-pair"><span class="btn">Show</span><span class="btn">Hide</span></div>
        </div>
      </div>
      <div class="sect open"><b class="tri-d bright"></b><span>Transform Attributes</span></div>
      <div class="rows">
        <div class="row"><label>Translate</label><span class="fld">0.000</span><span class="fld">0.000</span><span class="fld">0.000</span></div>
        <div class="row"><label>Rotate</label><span class="fld">0.000</span><span class="fld">0.000</span><span class="fld">0.000</span></div>
        <div class="row"><label>Scale</label><span class="fld">1.000</span><span class="fld">1.000</span><span class="fld">1.000</span></div>
        <div class="row"><label>Shear</label><span class="fld">0.000</span><span class="fld">0.000</span><span class="fld">0.000</span></div>
        <div class="row"><label>Rotate Order</label><span class="rot-drop"><span>xyz</span><i><b class="tri-d"></b></i></span></div>
        <div class="row"><label>Rotate Axis</label><span class="fld">0.000</span><span class="fld">0.000</span><span class="fld">0.000</span></div>
        <div class="row inh"><label></label><span class="check"><svg viewBox="0 0 12 12"><path d="M2 6l3 3 5-7" fill="none" stroke="#eee" stroke-width="1.800"/></svg></span><span class="inh-label">Inherits Transform</span></div>
      </div>
      <div class="offset"><b class="tri-r"></b><span>Offset Parent Matrix</span><i class="off-fld"></i></div>
      <div class="sect"><b class="tri-r"></b><span>Pivots</span></div>
      <div class="sect"><b class="tri-r"></b><span>Limit Information</span></div>
      <div class="sect"><b class="tri-r"></b><span>Display</span></div>
      <div class="sect"><b class="tri-r"></b><span>Node Behavior</span></div>
      <div class="sect"><b class="tri-r"></b><span>UUID</span></div>
      <div class="sect"><b class="tri-r"></b><span>Extra Attributes</span></div>
      <div class="attr-fill"></div>
      <i class="notes-grip"></i>
      <div class="notes-label">Notes:&nbsp; Table</div>
      <div class="notes"></div>
      <div class="attr-btns"><span class="btn">Select</span><span class="btn">Load Attributes</span><span class="btn">Copy Tab</span></div>
    </section>
  </main>

  <footer class="helpline">
    <svg class="help-ic" viewBox="0 0 16 16"><circle cx="8" cy="8" r="8" fill="#7fae36"/><text x="8" y="12" text-anchor="middle" class="t-help">?</text></svg>
    <span class="help-text">Freeze Transformations: Select an object(s)</span>
    <i class="grip g-mel"></i>
    <span class="mel">MEL</span>
    <span class="mel-input"></span>
    <span class="warn">// Warning: Cannot freeze below transform tableleg1 due to multiply-instanced child tablelegShape4</span>
    <svg class="script-ic" viewBox="0 0 18 24"><path d="M0 0h18v5H0z" fill="#bbb"/><path d="M2 2h2M5 2h2" stroke="#444"/><path d="M0 6h18v18H0z" fill="#c4c4c4"/><text x="9" y="19" text-anchor="middle" class="t-script">{;}</text></svg>
  </footer>
</div>

<div class="outliner">
  <div class="ol-title">
    <svg class="ol-logo" viewBox="0 0 13 16"><rect width="13" height="16" rx="1" fill="#2f9fc9"/><path d="M0 12h13v4H0z" fill="#1e6f96"/><text x="6.500" y="10" text-anchor="middle" class="logo-m">M</text></svg>
    <span class="ol-name">Outliner</span>
    <svg class="ol-min" viewBox="0 0 10 10"><path d="M0 5h10" stroke="#555"/></svg>
    <svg class="ol-max" viewBox="0 0 10 10"><rect x=".5" y=".5" width="9" height="9" fill="none" stroke="#555"/></svg>
    <svg class="ol-close" viewBox="0 0 10 10"><path d="M0 0l10 10M10 0L0 10" stroke="#555"/></svg>
  </div>
  <div class="ol-menu"><span>Display</span><span>Show</span><span>Help</span></div>
  <div class="ol-search">
    <svg viewBox="0 0 16 16"><path d="M3 1H1v2M13 1h2v2M3 15H1v-2M13 15h2v-2M4 1h8M4 15h8M1 4v8M15 4v8" fill="none" stroke="#666" stroke-dasharray="2 1"/></svg>
    <div class="ol-input"><span>Search...</span><b class="tri-d bright"></b></div>
  </div>
  <div class="ol-body">
    <div class="ol-list">
      <div class="ol-row hid"><svg class="cam"><use href="#cam"/></svg><span>persp</span></div>
      <div class="ol-row hid"><svg class="cam"><use href="#cam"/></svg><span>top</span></div>
      <div class="ol-row hid"><svg class="cam"><use href="#cam"/></svg><span>front</span></div>
      <div class="ol-row hid"><svg class="cam"><use href="#cam"/></svg><span>side</span></div>
      <div class="ol-row sel"><i class="minus"></i><svg class="grp" viewBox="0 0 18 14"><path d="M5 1h12l-4 12H1z" fill="#d8d8d8" stroke="#333"/><path d="M1 7h10M8 4l4 3-4 3z" stroke="#d33" fill="#d33" stroke-width="1.500"/></svg><span>Table</span></div>
      <div class="ol-row kid"><svg class="tee" viewBox="0 0 16 20"><path d="M.5 0v20M.5 10H9" stroke="#8a8a8a"/><circle cx="11" cy="10" r="2" fill="#999"/></svg><svg class="m"><use href="#mesh"/></svg><span>tabletop</span></div>
      <div class="ol-row kid"><svg class="tee" viewBox="0 0 16 20"><path d="M.5 0v20M.5 10H9" stroke="#8a8a8a"/><circle cx="11" cy="10" r="2" fill="#999"/></svg><svg class="m"><use href="#mesh"/></svg><span>tableleg2</span></div>
      <div class="ol-row kid"><svg class="tee" viewBox="0 0 16 20"><path d="M.5 0v20M.5 10H9" stroke="#8a8a8a"/><circle cx="11" cy="10" r="2" fill="#999"/></svg><svg class="m"><use href="#mesh"/></svg><span>middlefootstep</span></div>
      <div class="ol-row kid"><svg class="tee" viewBox="0 0 16 20"><path d="M.5 0v20M.5 10H9" stroke="#8a8a8a"/><circle cx="11" cy="10" r="2" fill="#999"/></svg><svg class="m"><use href="#mesh"/></svg><span>tableleg3</span></div>
      <div class="ol-row kid"><svg class="tee" viewBox="0 0 16 20"><path d="M.5 0v20M.5 10H9" stroke="#8a8a8a"/><circle cx="11" cy="10" r="2" fill="#999"/></svg><svg class="m"><use href="#mesh"/></svg><span>tablefootstep1</span></div>
      <div class="ol-row kid"><svg class="tee" viewBox="0 0 16 20"><path d="M.5 0v20M.5 10H9" stroke="#8a8a8a"/><circle cx="11" cy="10" r="2" fill="#999"/></svg><svg class="m"><use href="#mesh"/></svg><span>tableleg4</span></div>
      <div class="ol-row kid"><svg class="tee" viewBox="0 0 16 20"><path d="M.5 0v20M.5 10H9" stroke="#8a8a8a"/><circle cx="11" cy="10" r="2" fill="#999"/></svg><svg class="m"><use href="#mesh"/></svg><span>tablefootstep2</span></div>
      <div class="ol-row kid"><svg class="tee" viewBox="0 0 16 20"><path d="M.5 0v10H9" stroke="#8a8a8a" fill="none"/><circle cx="11" cy="10" r="2" fill="#999"/></svg><svg class="m"><use href="#mesh"/></svg><span>tableleg1</span></div>
      <div class="ol-row st"><svg class="s"><use href="#set"/></svg><span>defaultLightSet</span></div>
      <div class="ol-row st"><svg class="s"><use href="#set"/></svg><span>defaultObjectSet</span></div>
    </div>
    <div class="ol-vbar"><b class="tri-u"></b><i class="ol-vthumb"></i><b class="tri-d"></b></div>
  </div>
  <div class="ol-hbar"><b class="tri-l"></b><i class="ol-hthumb"></i><b class="tri-r"></b></div>
  <i class="ol-grip"></i>
</div>

<div class="note">When I use the Special Duplicate function that the module videos tell us to<br>use, but when I look online, it appears that using this Special Duplicate breaks<br>the Freeze transform.&nbsp; Can you please let me know how to fix this problem?&nbsp; I<br>would like to avoid losing points for the same thing on every assignment.</div>
<svg class="big-arrow" viewBox="0 0 310 106"><path d="M0 24H153V0L310 52 153 106V79H0Z" fill="#8a0018"/></svg>
<i class="red-dot"></i>
</body>
</html>
```

FILE: styles.css
```css
* { box-sizing: border-box; }
html, body { margin: 0; padding: 0; background: #fff; }
body { position: relative; width: 1958px; height: 1088px; overflow: hidden; font-family: "Open Sans", "Noto Sans", sans-serif; font-size: 10.5px; color: #c4c4c4; }
i, b { display: block; font-style: normal; flex: none; }
svg { display: block; flex: none; }
.defs { position: absolute; }
.app { width: 1919px; height: 1034px; display: flex; flex-direction: column; background: #444; border-bottom: 1px solid #3a2a2a; }

/* triangles */
.tri-d { width: 0; height: 0; border-left: 5px solid transparent; border-right: 5px solid transparent; border-top: 6px solid #bdbdbd; }
.tri-d.bright { border-top-color: #eee; }
.tri-d.small { border-left-width: 4px; border-right-width: 4px; border-top-width: 5px; border-top-color: #999; }
.tri-u { width: 0; height: 0; border-left: 5px solid transparent; border-right: 5px solid transparent; border-bottom: 6px solid #bdbdbd; }
.tri-r { width: 0; height: 0; border-top: 6px solid transparent; border-bottom: 6px solid transparent; border-left: 6px solid #eee; }
.tri-l { width: 0; height: 0; border-top: 5px solid transparent; border-bottom: 5px solid transparent; border-right: 5px solid #bbb; }

/* title bar */
.titlebar { height: 23px; flex: none; background: #8e8ad8; display: flex; align-items: center; padding-left: 4px; color: #15152a; font-size: 11.6px; }
.title-logo { width: 12px; height: 16px; margin-right: 6px; }
.logo-m { font: bold 9px "Liberation Sans", sans-serif; fill: #fff; }
.title-text { white-space: pre; }
.win-btns { margin-left: auto; display: flex; gap: 34px; padding-right: 20px; }
.win-btns svg { width: 12px; height: 12px; }

/* menu */
.menubar { height: 27px; flex: none; display: flex; align-items: center; gap: 15px; padding-left: 8px; white-space: nowrap; font-size: 11px; }
.workspace { margin-left: auto; display: flex; align-items: center; font-size: 10.5px; }
.ws-label { margin-right: 6px; color: #bbb; }
.ws-drop { width: 192px; height: 19px; background: #5b5b5b; display: flex; align-items: center; padding-left: 3px; justify-content: space-between; color: #c8c8c8; }
.ws-arrow { width: 20px; height: 19px; display: flex; align-items: center; justify-content: center; border-left: 1px solid #505050; }
.lock { width: 12px; height: 19px; margin: 0 7px 0 9px; }

/* status line */
.statusline { height: 30px; flex: none; display: flex; align-items: center; border-bottom: 2px solid #383838; padding-left: 3px; }
.grip { width: 4px; height: 20px; background-image: radial-gradient(#8a8a8a 35%, transparent 40%); background-size: 2px 3px; }
.g-status { margin-right: 6px; }
.mode-drop { width: 98px; height: 20px; background: #5b5b5b; display: flex; align-items: center; justify-content: space-between; padding-left: 3px; color: #c8c8c8; font-size: 11px; }
.mode-arrow { width: 20px; height: 20px; display: flex; align-items: center; justify-content: center; border-left: 1px solid #4c4c4c; }
.vsep { width: 2px; height: 22px; background: #6e6e6e; }
.ml5 { margin-left: 5px; } .ml7 { margin-left: 7px; } .ml8 { margin-left: 8px; } .ml9 { margin-left: 9px; } .ml10 { margin-left: 10px; } .ml11 { margin-left: 11px; } .ml13 { margin-left: 13px; } .ml16 { margin-left: 16px; } .ml20 { margin-left: 20px; }
.cells { display: flex; }
.cell { width: 23px; height: 22px; display: flex; align-items: center; justify-content: center; }
.cell svg { width: 19px; height: 21px; }
.cell svg.wide { width: 22px; height: 23px; }
.cell.active { background: #5285a6; }
.chev { width: 5px; height: 22px; }
.sbox { width: 98px; height: 21px; background: #3f3f3f; display: flex; align-items: center; padding-left: 6px; color: #c4c4c4; font-size: 10.5px; border: 1px solid #3b3b3b; }
.ipr { font: bold 7px "Liberation Sans", sans-serif; fill: #333; }
.user-drop { margin-left: 13px; width: 120px; height: 22px; background: #595959; display: flex; align-items: center; padding: 0 4px 0 5px; color: #d8d8d8; }
.user-drop svg { width: 13px; height: 17px; margin-right: 6px; }
.user-drop b { margin-left: auto; }
.right-icons { margin-left: auto; display: flex; align-items: center; padding-right: 3px; }
.right-icons svg { width: 19px; height: 23px; margin-right: 8px; }
.right-icons svg.fig { width: 11px; margin-right: 6px; }
.right-icons svg.rt-tree { width: 16px; height: 20px; margin-right: 9px; }
.rt-active { width: 22px; height: 23px; background: #5285a6; display: flex; align-items: center; justify-content: center; margin-right: 2px; }
.rt-active svg { width: 18px !important; margin: 0 !important; }
.right-icons svg:last-child { margin-right: 0; }

/* shelf */
.shelf { height: 67px; flex: none; display: flex; padding: 1px 3px 1px 14px; gap: 4px; border-bottom: 2px solid #383838; }
.shelf-side { width: 19px; height: 63px; background: #383838; display: flex; flex-direction: column; align-items: center; }
.bars { width: 10px; height: 5px; margin-top: 14px; border-top: 2px solid #bbb; border-bottom: 2px solid #bbb; }
.gear { width: 12px; height: 12px; margin-top: 20px; }
.shelf-main { flex: 1; display: flex; flex-direction: column; min-width: 0; }
.shelf-tabs { height: 19px; background: #333; display: flex; padding-top: 3px; gap: 2px; }
.stab { height: 16px; background: #3e3e3e; color: #9a9a9a; display: flex; align-items: center; justify-content: center; border-radius: 2px 2px 0 0; font-size: 10.5px; flex: none; white-space: nowrap; padding-top: 1px; }
.stab.on { background: #444; color: #e4e4e4; }
.w33 { width: 33px; } .w43 { width: 43px; } .w48 { width: 48px; } .w57 { width: 57px; } .w62 { width: 62px; } .w64 { width: 64px; } .w66 { width: 66px; } .w70 { width: 70px; } .w74 { width: 74px; } .w75 { width: 75px; } .w76 { width: 76px; } .w77 { width: 77px; } .w79 { width: 79px; } .w89 { width: 89px; } .w97 { width: 97px; } .w101 { width: 101px; } .w106 { width: 106px; }
.shelf-icons { flex: 1; display: flex; align-items: center; padding-left: 3px; }
.sc { width: 35px; height: 34px; flex: none; display: flex; align-items: center; justify-content: center; }
.sc svg { width: 26px; height: 26px; }
.sc svg.tall { width: 26px; height: 32px; }
.big-t { font: 36px/34px "Liberation Serif", serif; color: #e29a56; }
.ssep { width: 2px; height: 34px; background: #6f6f6f; margin: 0 16.500px; }
.t-svg { font: bold 11px "Liberation Sans", sans-serif; fill: #555; }
.t-zero { font: bold 7.500px "Liberation Sans", sans-serif; fill: #cfeaf2; }
.scroller { margin-left: auto; width: 12px; height: 36px; margin-right: 7px; display: flex; flex-direction: column; align-items: center; justify-content: space-between; }
.knob { width: 10px; height: 14px; border-radius: 5px; background: #777; }

/* main */
.main { flex: 1; min-height: 0; display: flex; background: #3c3c3c; }
.toolbox { width: 44px; flex: none; background: #444; margin-right: 5px; display: flex; flex-direction: column; align-items: center; padding-top: 2px; }
.grip-h { width: 30px; height: 2px; background-image: radial-gradient(#8a8a8a 40%, transparent 45%); background-size: 3px 2px; }
.tool { width: 36px; height: 36px; margin-bottom: 1px; flex: none; display: flex; align-items: center; justify-content: center; }
.tool svg { width: 28px; height: 28px; }
.t-first { margin-top: 10px; }
.tool-on { background: #5285a6; }
.tool-on svg { width: 34px; height: 34px; }
.tool-out { height: 36px; margin-top: 5px; margin-bottom: 0; }
.tool-rule { width: 36px; height: 2px; background: #777; margin-top: 6px; }
.rule-a { margin-top: 79px; }
.t-mag { margin-top: 3px; }
.t-mag svg { width: 24px; height: 24px; }
.lay-one { width: 28px; height: 28px; margin-top: 9px; border: 1px solid #bbb; outline: none; display: flex; align-items: center; justify-content: center; padding: 3px; background: #555; box-shadow: inset 0 0 0 2px #444; }
.lay-one svg { width: 18px; height: 16px; }
.lay-four { width: 28px; height: 28px; margin-top: 8px; display: grid; grid-template-columns: 13px 13px; grid-template-rows: 13px 13px; gap: 2px; }
.lay-two { width: 28px; height: 29px; margin-top: 8px; display: flex; gap: 2px; }
.plus { border: 1px solid #bbb; background: linear-gradient(#bbb, #bbb) center/7px 1px no-repeat, linear-gradient(#bbb, #bbb) center/1px 7px no-repeat; }
.plus.tall { width: 13px; height: 29px; }
.fill-d { background: #c0c0c0; display: flex; align-items: center; justify-content: center; }
.fill-d.tall { width: 13px; height: 29px; }
.fill-d svg { width: 9px; height: 7px; }
.m-logo { width: 30px; height: 32px; margin-top: auto; margin-bottom: 6px; }
.logo-big { font: bold 17px "Liberation Sans", sans-serif; fill: #fff; }
.logo-aya { font: bold 6.500px "Liberation Sans", sans-serif; fill: #d8eef7; }

/* viewport */
.viewport { width: 892px; flex: none; margin-top: 5px; height: 838px; background: #444; display: flex; flex-direction: column; position: relative; overflow: hidden; }
.vp-menu { height: 19px; width: 302px; display: flex; justify-content: space-between; align-items: center; padding-left: 8px; flex: none; }
.vp-tools { height: 21px; flex: none; display: flex; align-items: center; padding-left: 4px; }
.vp-tick { width: 2px; height: 12px; background: #777; margin-right: 273.5px; }
.vc { width: 19px; height: 19px; flex: none; display: flex; align-items: center; justify-content: center; }
.vc svg { width: 16px; height: 16px; }
.vc.narrow { width: 20px; margin-left: 3px; }
.vc.blue { background: #5285a6; height: 20px; }
.vc.dark-on { background: #3e3e3e; border: 1px solid #333; }
.vp-sep { width: 2px; height: 14px; background: #777; margin: 0 5px 0 4px; flex: none; }
.vp-val { width: 37px; height: 16px; background: #2d2d2d; border-radius: 2px; margin-left: 3px; display: flex; align-items: center; padding-left: 5px; color: #bbb; flex: none; font-size: 11px; }
.vp-val.v2 { margin-left: 2px; }
.on-btn { margin-left: 2px; }
.t-on { font: bold 6px "Liberation Sans", sans-serif; fill: #123; }
.t-vp { font: bold 12px "Liberation Serif", serif; fill: #48a6ba; }
.ac { width: 15px; height: 19px; margin-left: 2px; background: #5c5c5c; display: flex; align-items: center; padding-left: 1px; font-size: 9.5px; color: #aaa; flex: none; white-space: nowrap; }
.scene { flex: 1; min-height: 0; overflow: hidden; }
.grid3d { stroke: #484848; stroke-width: 1; fill: none; }
.grid3d-dark { stroke: #3f3f3f; stroke-width: 2; fill: none; }
.t-fill { fill: #20157a; }
.t-out { fill: none; stroke: #d0d0e4; stroke-width: 5; }
.t-out.thin { stroke-width: 3; }
.t-teal { fill: none; stroke: #5fe6cc; stroke-width: 2.500; }
.persp { font: bold 10.500px "Open Sans", sans-serif; fill: #e8e8e8; }
.front { font: bold 9.500px "Liberation Sans", sans-serif; fill: #6b6b6b; }

/* UV */
.uv-panel { width: 504px; flex: none; margin-left: 7px; display: flex; flex-direction: column; height: 845px; }
.tab-strip { height: 21px; flex: none; display: flex; gap: 2px; align-items: flex-end; }
.ptab { height: 17px; background: #3f3f3f; color: #b4b4b4; display: flex; align-items: center; justify-content: center; flex: none; border-radius: 2px 2px 0 0; font-size: 11px; }
.ptab.on { background: #4a4a4a; color: #d0d0d0; }
.uv-tab { width: 70px; }
.uv-box { flex: 1; min-height: 0; border: 1px solid #707070; border-bottom-width: 1px; display: flex; flex-direction: column; background: #444; }
.uv-menu { height: 21px; flex: none; display: flex; align-items: center; gap: 15px; padding: 0 0 3px 8px; font-size: 11px; white-space: nowrap; }
.uv-tools { height: 32px; flex: none; display: flex; align-items: center; padding-left: 6px; }
.uc { width: 23px; height: 22px; flex: none; display: flex; align-items: center; justify-content: center; }
.uc svg { width: 16px; height: 16px; }
.uc.rgb { margin-left: 3px; }
.uc.rgb svg { width: 19px; height: 19px; }
.uc.on { background: #5285a6; }
.uc-sep { width: 1px; height: 20px; background: #3c3c3c; margin: 0 2px; flex: none; }
.uc-bar { width: 2px; height: 22px; background: #5285a6; margin: 0 1px 0 0; flex: none; }
.checker { width: 15px; height: 15px; margin: 0 4px; background: conic-gradient(#e4e4e4 25%, #444 0 50%, #e4e4e4 0 75%, #444 0) 0 0/4px 4px; }
.uv-tri { margin: 0 0 0 3px; }
.no-tex { width: 117px; height: 20px; margin-left: 6px; background: #424242; color: #7d7d7d; display: flex; align-items: center; padding-left: 4px; font-size: 11px; flex: none; }
.t-rgb { font: bold 6.500px "Liberation Sans", sans-serif; fill: #4da38a; }
.slider { width: 54px; height: 5px; margin-left: 2px; border-radius: 3px; background: #2e2e2e; display: flex; align-items: center; padding-left: 24px; flex: none; }
.slider-knob { width: 7px; height: 13px; border-radius: 2px; background: #b4b4b4; }
.uv-chev1 { margin-left: 7px; } .uv-chev2 { margin-left: 6px; }
.uv-canvas { flex: 1; min-height: 0; overflow: hidden; }
.uvg-line { stroke: #525252; stroke-width: 1; fill: none; }
.uv-a { fill: #3048d0; stroke: #d2d6ef; stroke-width: 6; stroke-linejoin: round; }
.uv-b { fill: #0a1ff0; stroke: #d2d6ef; stroke-width: 6; stroke-linejoin: round; }
.uv-c { fill: #0035e8; stroke: #d2d6ef; stroke-width: 6; stroke-linejoin: round; }
.uv-i { fill: none; stroke: #d2d6ef; stroke-width: 3; }
.ax-blue { stroke: #1c1cae; stroke-width: 1.500; fill: none; }
.ax-green { stroke: #26a626; stroke-width: 1.500; fill: none; }
.ax-red { stroke: #b02424; stroke-width: 1.500; fill: none; }
.ax-black { stroke: #0c0c0c; stroke-width: 1; fill: none; }
.uv-labels text { font: 10.500px "Liberation Sans", sans-serif; fill: #3c3c3c; }
.uv-labels .lbl-b { font-weight: bold; }
.uv-status { font: bold 10.150px "Open Sans", sans-serif; fill: #dcdcdc; }

/* attribute editor */
.attr-panel { width: 461px; flex: none; margin-left: 6px; height: 843px; background: #444; display: flex; flex-direction: column; }
.attr-panel .tab-strip { background: #3c3c3c; }
.attr-menu { height: 30px; flex: none; display: flex; align-items: center; gap: 15px; padding: 0 0 2px 8px; font-size: 11px; }
.pin { width: 11px; height: 11px; margin-left: auto; margin-right: 14px; }
.node-tabs { margin: 11px 7px 0 4px; height: 18px; flex: none; background: #363636; padding-left: 2px; }
.node-tab { display: flex; align-items: center; padding-left: 10px; width: 48px; height: 18px; background: #444; font-size: 11px; }
.xform-row { display: flex; margin-top: 10px; height: 64px; flex: none; }
.xf-label { width: 149px; text-align: right; line-height: 20px; padding-top: 21px; font-size: 11px; }
.xf-field { width: 154px; height: 18px; margin: 23px 0 0 8px; background: #2b2b2b; border-radius: 2px; display: flex; align-items: center; padding-left: 5px; font-size: 11px; }
.xf-icons { margin: 13px 0 0 14px; display: flex; flex-direction: column; gap: 9px; }
.xf-icons svg { width: 17px; height: 13px; }
.xf-btns { margin-left: 11px; width: 70px; display: flex; flex-direction: column; gap: 2px; }
.btn { height: 20px; background: #5b5b5b; color: #d4d4d4; display: flex; align-items: center; justify-content: center; font-size: 11px; flex: 1; white-space: nowrap; }
.btn-pair { display: flex; gap: 2px; height: 20px; }
.attr-btns .btn { height: 26px; }
.sect { margin: 0 12px 2px 9px; height: 20px; flex: none; background: #5a5a5a; border-radius: 2px; display: flex; align-items: center; padding-left: 10px; color: #b4b4b4; font-weight: 700; font-size: 10.5px; }
.sect span { position: relative; top: 1px; }
.sect b { margin-right: 17px; transform: translateY(-3px); }
.sect.open { margin-top: 17px; padding-left: 7px; margin-bottom: 2px; }
.sect.open b { margin-right: 16px; }
.rows { display: flex; flex-direction: column; flex: none; }
.row { display: flex; height: 22px; align-items: center; flex: none; }
.row label { width: 153px; text-align: right; margin-right: 9px; font-size: 11px; color: #b4b4b4; flex: none; }
.fld { width: 68px; height: 18px; margin-right: 4px; background: #2c2c2c; border-radius: 2px; display: flex; align-items: center; padding-left: 5px; color: #bbb; font-size: 11px; }
.rot-drop { width: 59px; height: 19px; margin-left: 1px; background: #5b5b5b; display: flex; align-items: center; padding-left: 3px; font-family: "Liberation Sans", sans-serif; font-size: 10.5px; color: #ccc; }
.rot-drop i { margin-left: auto; width: 19px; height: 19px; display: flex; align-items: center; justify-content: center; border-left: 2px solid #444; }
.row.inh { height: 19px; }
.check { width: 12px; height: 12px; background: #2c2c2c; border-radius: 2px; }
.inh-label { margin-left: 6px; font-size: 11px; color: #b4b4b4; }
.offset { margin: 0 16px 3px 14px; height: 28px; flex: none; border: 1px solid #2e2e2e; border-top-color: #333; border-radius: 3px; display: flex; align-items: center; padding-left: 10px; font-size: 11px; color: #b4b4b4; }
.offset b { margin-right: 15px; }
.off-fld { height: 20px; width: 285px; margin-left: auto; margin-right: 2px; background: #2c2c2c; border-radius: 2px; }
.attr-fill { flex: 1; min-height: 0; }
.notes-grip { align-self: center; width: 150px; height: 2px; margin: 0 0 3px 0; flex: none; background-image: radial-gradient(#8a8a8a 40%, transparent 45%); background-size: 3px 2px; }
.notes-label { margin-left: 12px; height: 14px; line-height: 14px; flex: none; color: #b4b4b4; font-size: 11px; }
.notes { height: 100px; flex: none; margin-right: 6px; background: #2d2d2d; }
.attr-btns { display: flex; gap: 2px; height: 26px; margin-top: 5px; flex: none; padding-right: 3px; }

/* help line */
.helpline { height: 39px; flex: none; border-top: 2px solid #363636; display: flex; align-items: center; padding-left: 15px; background: #444; }
.help-ic { width: 16px; height: 16px; }
.t-help { font: bold 11px "Liberation Sans", sans-serif; fill: #333; }
.help-text { margin-left: 8px; width: 188px; white-space: nowrap; color: #c8c8c8; font-size: 9.3px; }
.g-mel { margin-left: 737px; }
.mel { margin-left: 9px; width: 29px; color: #c8c8c8; }
.mel-input { width: 342px; height: 20px; background: #2e2e2e; border-radius: 3px; }
.warn { margin-left: 4px; width: 530px; height: 20px; background: #d8c87e; color: #3f3a26; border-radius: 2px; display: flex; align-items: center; padding-left: 5px; white-space: nowrap; font-size: 11.2px; }
.script-ic { width: 18px; height: 23px; margin-left: 9px; }
.t-script { font: bold 11px "Liberation Mono", monospace; fill: #333; }

/* outliner (floating window) */
.outliner { position: absolute; left: 61px; top: 153px; width: 274px; height: 820px; background: #454545; border: 1px solid #555; border-top: 0; border-radius: 9px; overflow: hidden; display: flex; flex-direction: column; box-shadow: 0 0 6px rgba(0,0,0,.25); }
.ol-title { height: 30px; flex: none; background: #fbfbfb; display: flex; align-items: center; padding-left: 8px; }
.ol-logo { width: 13px; height: 16px; }
.ol-name { margin-left: 9px; color: #6c6c6c; font-size: 11.5px; width: 124px; }
.ol-min, .ol-max, .ol-close { width: 10px; height: 10px; }
.ol-max { margin-left: 35px; } .ol-close { margin-left: 36px; }
.ol-menu { height: 24px; flex: none; display: flex; align-items: center; gap: 15px; padding-left: 11px; font-size: 11px; }
.ol-search { height: 21px; margin-top: 3px; flex: none; display: flex; align-items: center; padding-left: 8px; }
.ol-search svg { width: 16px; height: 16px; }
.ol-input { margin-left: 6px; width: 239px; height: 18px; background: #2c2c2c; border-radius: 2px; display: flex; align-items: center; padding: 0 6px 0 4px; color: #888; font-size: 10.5px; justify-content: space-between; }
.ol-body { flex: 1; min-height: 0; margin: 0 3px 0 3px; display: flex; background: #393939; padding-top: 0; }
.ol-list { width: 254px; flex: none; }
.ol-row { height: 20px; display: flex; align-items: center; color: #c8c8c8; font-size: 10.5px; letter-spacing: .2px; white-space: nowrap; }
.ol-row:first-child { margin-top: 0; }
.ol-row.hid { padding-left: 35px; color: #6e6e6e; }
.cam { width: 15px; height: 9px; margin-right: 3px; }
.ol-row.sel { background: #5285a6; color: #fff; padding-left: 21px; }
.minus { width: 9px; height: 9px; border: 1px solid #7a9bb0; background: linear-gradient(#7a9bb0, #7a9bb0) center/5px 1px no-repeat; }
.grp { width: 18px; height: 14px; margin: 0 3px 0 4px; }
.ol-row.kid { padding-left: 25px; }
.tee { width: 16px; height: 20px; }
.m { width: 16px; height: 12px; margin: 0 3px 0 6px; }
.ol-row.st { padding-left: 35px; }
.s { width: 16px; height: 16px; margin-right: 3px; }
.ol-vbar { width: 10px; margin-left: 2px; display: flex; flex-direction: column; align-items: center; padding-top: 3px; padding-bottom: 3px; }
.ol-vthumb { flex: 1; width: 10px; margin: 3px 0; background: #5a5a5a; border-radius: 5px; }
.ol-hbar { height: 10px; margin: 0 3px; flex: none; background: #393939; display: flex; align-items: center; padding-left: 4px; }
.ol-hthumb { width: 228px; height: 10px; margin: 0 3px 0 4px; border-radius: 5px; background: #5a5a5a; }
.ol-hbar .tri-r { border-top-width: 5px; border-bottom-width: 5px; border-left-width: 5px; border-left-color: #bbb; }
.ol-grip { width: 90px; height: 2px; margin: 3px auto 5px; flex: none; background-image: radial-gradient(#8a8a8a 40%, transparent 45%); background-size: 3px 2px; }

/* annotation over the screenshot */
.note { position: absolute; left: 1025px; top: 860px; width: 507px; height: 103px; background: #fff; color: #000; font-family: Lato, "Open Sans", sans-serif; font-size: 14.75px; line-height: 19.300px; padding: 2px 0 0 1px; white-space: nowrap; overflow: hidden; }
.big-arrow { position: absolute; left: 1038px; top: 963px; width: 310px; height: 106px; }
.red-dot { position: absolute; left: 1954px; top: 1083px; width: 3px; height: 5px; background: #c01020; border-radius: 1px; }
```
